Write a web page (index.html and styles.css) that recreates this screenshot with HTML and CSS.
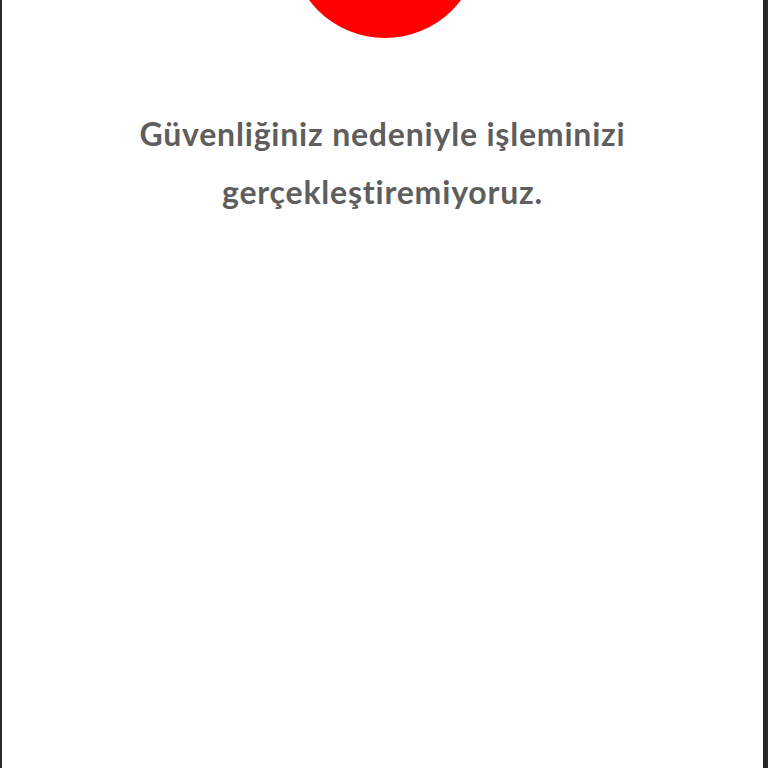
FILE: index.html
```html
<!DOCTYPE html>
<html lang="tr">
<head>
<meta charset="utf-8">
<link rel="stylesheet" href="styles.css">
</head>
<body>
<div class="screen">
  <div class="badge"></div>
  <p class="message">Güvenliğiniz nedeniyle işleminizi<br>gerçekleştiremiyoruz.</p>
</div>
</body>
</html>
```
FILE: styles.css
```css
html, body {
  margin: 0;
  padding: 0;
  background: #ffffff;
}
.screen {
  box-sizing: border-box;
  width: 768px;
  height: 768px;
  overflow: hidden;
  border-left: 2px solid #2a2a2a;
  border-right: 5px solid #262626;
  display: flex;
  flex-direction: column;
  align-items: center;
  background: #ffffff;
}
.badge {
  flex: none;
  width: 190px;
  height: 190px;
  border-radius: 50%;
  background: #fe0000;
  margin-top: -152px;
  margin-left: 5px;
}
.message {
  margin: 67px 0 0;
  font-family: Lato, "Noto Sans", sans-serif;
  font-weight: 700;
  font-size: 32px;
  line-height: 58px;
  color: #5e5e5e;
  text-align: center;
  letter-spacing: 0.8px;
}
```
